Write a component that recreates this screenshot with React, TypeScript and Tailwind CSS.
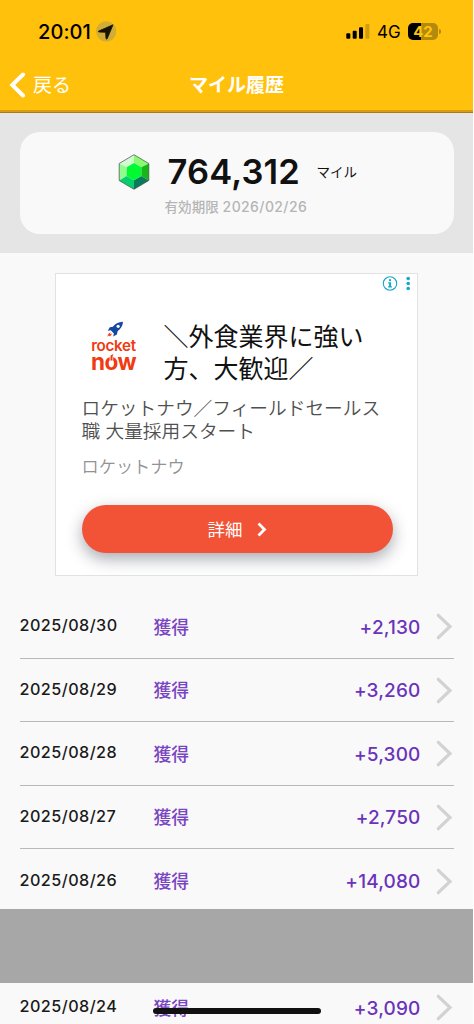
import React from "react";

const rows = [
  { date: "2025/08/30", amount: "+2,130" },
  { date: "2025/08/29", amount: "+3,260" },
  { date: "2025/08/28", amount: "+5,300" },
  { date: "2025/08/27", amount: "+2,750" },
  { date: "2025/08/26", amount: "+14,080" },
];

function StatusBar() {
  return (
    <div className="flex h-[62px] items-start pl-[38px] pt-[20px]">
      <span className="w-[58px] whitespace-nowrap text-[20px] font-medium leading-[24px] tracking-[0.1px] text-black">20:01</span>
      <svg className="mt-px" width="21" height="21" viewBox="0 0 21 21">
        <circle cx="10.2" cy="10.5" r="10.2" fill="#d1ad35" />
        <path d="M17 3.8 L2.6 10.1 Q2 10.9 3 11 L9.6 11.3 L10 17.6 Q10.5 18.5 11.2 17.7 Z" fill="#171300" stroke="#171300" strokeWidth="0.8" strokeLinejoin="round" />
      </svg>
      <svg className="ml-[229px] mt-[4px]" width="24" height="15" viewBox="0 0 24 15">
        <rect x="0.3" y="9.2" width="4" height="5.5" rx="1" />
        <rect x="6.7" y="6.8" width="4" height="7.9" rx="1" />
        <rect x="13" y="3.3" width="4" height="11.4" rx="1" />
        <rect x="19.4" y="0" width="4" height="14.7" rx="1" fill="#cf9d0d" />
      </svg>
      <span className="ml-[7px] w-[31px] text-[17px] leading-[25px] text-black">4G</span>
      <div className="mt-[3px] flex items-center">
        <div className="flex h-[17px] w-[30px] items-center justify-center rounded-[5px] bg-linear-to-r from-black from-43% to-[#b48a0c] to-43% text-[15px] font-bold leading-[17px] text-[#ffc40c]">42</div>
        <div className="ml-px h-[5px] w-[2px] rounded-r-full bg-[#b48a0c]" />
      </div>
    </div>
  );
}

function Header() {
  return (
    <header className="h-[113px] border-b border-[#ad7a12] bg-[#ffc10b] shadow-[inset_0_-2px_0_#d99d12]">
      <StatusBar />
      <div className="grid h-[46px] grid-cols-3 items-center text-white">
        <div className="flex items-center pl-[9px]">
          <svg width="17" height="27" viewBox="0 0 17 27" fill="none" stroke="white" strokeWidth="4" strokeLinecap="round">
            <path d="M14 2.5 L3.3 13 L14 23.5" />
          </svg>
          <span className="ml-[7px] pt-[3px] text-[19px]">戻る</span>
        </div>
        <h1 className="whitespace-nowrap pt-[2px] text-center text-[19px] font-bold">マイル履歴</h1>
      </div>
    </header>
  );
}

function Gem() {
  return (
    <svg width="32" height="36" viewBox="0 0 32 36">
      <path d="M16 .7 1.2 9.5 8.7 13.2 16 9Z" fill="#d1fbd1" />
      <path d="M16 .7 30.8 9.5 23.3 13.2 16 9Z" fill="#86fb70" />
      <path d="M1.2 9.5 8.7 13.2V22L1.2 26.5Z" fill="#92fb8e" />
      <path d="M30.8 9.5 23.3 13.2V22L30.8 26.5Z" fill="#19b51b" />
      <path d="M1.2 26.5 8.7 22 16 26.2V35.3Z" fill="#06cf6b" />
      <path d="M30.8 26.5 23.3 22 16 26.2V35.3Z" fill="#087b5d" />
      <path d="M16 9 23.3 13.2V22L16 26.2 8.7 22V13.2Z" fill="#00fa32" />
      <path d="M16 .7 30.8 9.5V26.5L16 35.3 1.2 26.5V9.5Z" fill="none" stroke="#414a43" strokeWidth=".7" />
    </svg>
  );
}

function Balance() {
  return (
    <section className="h-[140px] bg-[#e5e5e5] px-[19.5px] pt-[19px]">
      <div className="flex h-[102px] flex-col rounded-[20px] bg-[#f9f9f9]">
        <div className="mt-[21px] flex h-[38px] items-center pl-[98px]">
          <Gem />
          <span className="ml-[18px] w-[149px] whitespace-nowrap text-[34.5px] font-semibold leading-[38px] tracking-[0.15px] text-[#111]">764,312</span>
          <span className="text-[13.5px] text-[#111]">マイル</span>
        </div>
        <p className="mt-[6px] whitespace-nowrap pl-[145px] text-[13.5px] font-medium leading-[20px] tracking-[0.1px] text-[#b5b5b5]">
          有効期限 <span className="text-[14px] tracking-[0.4px]">2026/02/26</span>
        </p>
      </div>
    </section>
  );
}

function RocketLogo() {
  return (
    <div className="flex w-[46px] flex-col items-center text-[#ef3a12]">
      <svg className="ml-[3px]" width="17" height="17" viewBox="0 0 18 17">
        <path d="M17 .3 Q9.5 .7 6.3 5.7 L3 6.1 .8 9.7 4 9.3 7.3 12.7 6.6 16 10.5 13.8 11.2 10.4 Q16.4 6.5 17 .3Z" fill="#1746a2" />
        <circle cx="11.8" cy="5.1" r="1.7" fill="white" />
        <path d="M3.8 11.3 Q1 12.3 .4 16.2 L2 14.9 3.2 15.9 5.6 12.8 3.1 13.5Z" fill="#f23c18" />
      </svg>
      <span className="mt-px text-[15.2px] font-semibold leading-[14px] tracking-[-0.3px]">rocket</span>
      <div className="relative text-[22.5px] font-bold leading-[17px] tracking-[-0.6px]">
        now
        <svg className="absolute left-[17px] top-[1px]" width="7" height="8" viewBox="0 0 7 8">
          <path d="M1.6 5.8V1.2H5.2V5.8Z" fill="white" />
          <path d="M2.5 6.5V1.4L5.4 0 4.6 2.2 4.4 6.5Z" fill="#ef3a12" />
        </svg>
      </div>
    </div>
  );
}

function Advertisement() {
  return (
    <section className="relative ml-[55px] mt-[20px] h-[303px] w-[363px] border border-[#e2e2e2] bg-white px-[25.5px]">
      <svg className="absolute right-[4px] top-[1px]" width="31" height="17" viewBox="0 0 31 17" fill="#13a7cc">
        <circle cx="8" cy="8.5" r="6.7" fill="none" stroke="#13a7cc" strokeWidth="1.1" />
        <rect x="7" y="4.2" width="2" height="2" />
        <path d="M6.2 7.3H9V11.3H9.9V12.5H6.1V11.3H7.1V8.4H6.2Z" />
        <circle cx="26.2" cy="3.5" r="1.8" />
        <circle cx="26.2" cy="8.5" r="1.8" />
        <circle cx="26.2" cy="13.5" r="1.8" />
      </svg>
      <div className="flex h-[119px] pl-[9px] pt-[47px]">
        <RocketLogo />
        <h2 className="ml-[27px] mt-px whitespace-nowrap text-[25px] leading-[31.5px] text-[#111]">＼外食業界に強い<br />方、大歓迎／</h2>
      </div>
      <p className="mt-[4px] whitespace-nowrap text-[18.7px] font-[350] leading-[23px] text-[#505050]">ロケットナウ／フィールドセールス<br />職 大量採用スタート</p>
      <p className="mt-[12px] text-[17.2px] font-[350] leading-[23px] text-[#929292]">ロケットナウ</p>
      <button className="mt-[27px] flex h-[48px] w-[311px] items-center justify-center rounded-full bg-[#f25235] text-[17.5px] text-white shadow-[0_6px_16px_rgba(40,46,65,0.4)]">
        <span className="pt-[2px]">詳細</span>
        <svg className="ml-[14px]" width="10" height="15" viewBox="0 0 10 15" fill="none" stroke="white" strokeWidth="2.8">
          <path d="M1.5 1.5 7.5 7.5 1.5 13.5" />
        </svg>
      </button>
    </section>
  );
}

function HistoryRow({ date, amount, divider }: { date: string; amount: string; divider: boolean }) {
  return (
    <div className={divider ? "mx-[19.5px] flex h-[63.5px] items-center border-b border-[#b9b9b9]" : "mx-[19.5px] flex h-[63.5px] items-center"}>
      <span className="w-[134px] pb-[2px] text-[16.2px] font-medium leading-[24px] tracking-[0.45px] text-[#1a1a1a]">{date}</span>
      <span className="pt-[4px] text-[17.8px] font-medium text-[#7a45c2]">獲得</span>
      <span className="ml-auto pt-[3px] text-[19px] font-medium tracking-[0.15px] text-[#6b33bb]">{amount}</span>
      <svg className="ml-[15px] mr-[1px] mt-px" width="17" height="27" viewBox="0 0 17 27" fill="none" stroke="#d2d2d2" strokeWidth="3.2" strokeLinecap="round">
        <path d="M2.3 2.3 14 13.5 2.3 24.7" />
      </svg>
    </div>
  );
}

export default function App() {
  return (
    <main className="relative h-[1024px] w-[474px] overflow-hidden border-r border-white bg-[#f9f9f9] font-[Inter,'Noto_Sans_CJK_JP',sans-serif]">
      <Header />
      <Balance />
      <Advertisement />
      <section className="pt-[19px]">
        {rows.map((row, index) => (
          <HistoryRow key={row.date} date={row.date} amount={row.amount} divider={index < 4} />
        ))}
        <div className="-mt-[4px] h-[74px] bg-[#a7a7a7]" />
        <div className="-mt-[7px]">
          <HistoryRow date="2025/08/24" amount="+3,090" divider={false} />
        </div>
      </section>
      <div className="absolute bottom-[10px] left-[153px] h-[6px] w-[168px] rounded-full bg-[#111]" />
    </main>
  );
}
